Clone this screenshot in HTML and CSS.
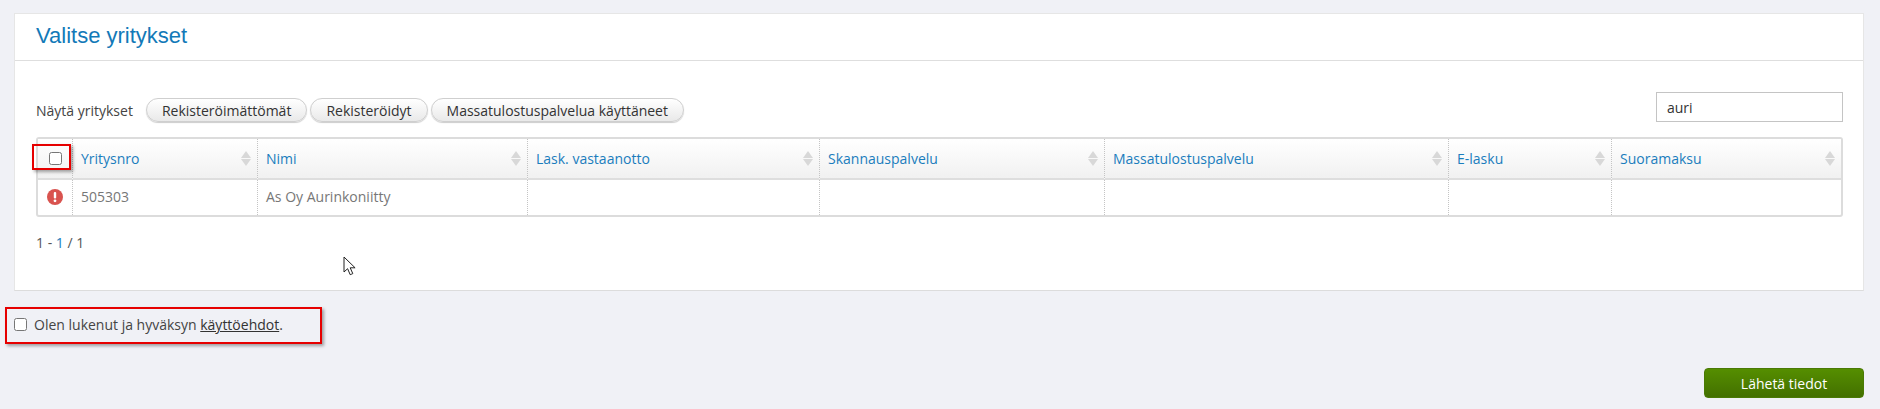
FILE: index.html
```html
<!DOCTYPE html>
<html lang="fi">
<head>
    <meta charset="UTF-8">
    <title>Valitse yritykset</title>
    <link rel="stylesheet" href="styles.css">
</head>
<body>

<section class="panel">
    <h1 class="panel-title">Valitse yritykset</h1>
    <div class="panel-body">
        <div class="toolbar">
            <div class="filters">
                <span class="filters-label">Näytä yritykset</span>
                <button class="pill" type="button">Rekisteröimättömät</button>
                <button class="pill" type="button">Rekisteröidyt</button>
                <button class="pill" type="button">Massatulostuspalvelua käyttäneet</button>
            </div>
            <input class="search" type="text" value="auri">
        </div>

        <div class="table-wrap">
            <table class="grid">
                <colgroup>
                    <col class="col-check">
                    <col class="col-nro">
                    <col class="col-name">
                    <col class="col-lask">
                    <col class="col-scan">
                    <col class="col-mass">
                    <col class="col-elasku">
                    <col>
                </colgroup>
                <thead>
                    <tr>
                        <th class="check-cell"><input class="box" type="checkbox"></th>
                        <th><span class="sort">Yritysnro</span></th>
                        <th><span class="sort">Nimi</span></th>
                        <th><span class="sort">Lask. vastaanotto</span></th>
                        <th><span class="sort">Skannauspalvelu</span></th>
                        <th><span class="sort">Massatulostuspalvelu</span></th>
                        <th><span class="sort">E-lasku</span></th>
                        <th><span class="sort">Suoramaksu</span></th>
                    </tr>
                </thead>
                <tbody>
                    <tr>
                        <td class="check-cell">
                            <svg class="alert" width="16" height="16" viewBox="0 0 16 16">
                                <circle cx="8" cy="8" r="8" fill="#d9534f"/>
                                <rect x="6.800" y="3" width="2.400" height="6.600" rx="1" fill="#fff"/>
                                <circle cx="8" cy="11.800" r="1.400" fill="#fff"/>
                            </svg>
                        </td>
                        <td>505303</td>
                        <td>As Oy Aurinkoniitty</td>
                        <td></td>
                        <td></td>
                        <td></td>
                        <td></td>
                        <td></td>
                    </tr>
                </tbody>
            </table>
            <span class="mark mark-head"></span>
        </div>

        <p class="pager">1 - <span class="pager-current">1</span> / 1</p>
    </div>
    <svg class="cursor" width="14" height="20" viewBox="0 0 14 20">
        <path d="M1 1v15l3.600-3.300 2.600 6 1-.4 1.600-.7-2.600-5.800h4.900z" fill="#fff" stroke="#222" stroke-width="1"/>
    </svg>
</section>

<label class="terms">
    <input class="box" type="checkbox">
    <span>Olen lukenut ja hyväksyn <a href="#">käyttöehdot</a>.</span>
</label>

<div class="actions">
    <button class="send" type="button">Lähetä tiedot</button>
</div>

</body>
</html>
```

FILE: styles.css
```css
body {
    margin: 0;
    height: 409px;
    overflow: hidden;
    background-color: #f0f1f6;
    color: #444;
    font-family: 'Open Sans', sans-serif;
    font-size: 14px;
}
.panel {
    position: relative;
    box-sizing: border-box;
    height: 278px;
    margin: 13px 16px 0 14px;
    background-color: #fff;
    border: 1px solid #e6e6e6;
    border-bottom-color: #dcdcdc;
}
.panel-title {
    height: 46px;
    margin: 0;
    padding-left: 21px;
    border-bottom: 1px solid #dedede;
    color: #1279b8;
    font-family: 'Liberation Sans', Arial, sans-serif;
    font-size: 22px;
    font-weight: normal;
    line-height: 43px;
}
.panel-body {
    padding: 30px 20px 0 21px;
}
.toolbar {
    display: flex;
    justify-content: space-between;
    align-items: flex-end;
    height: 31px;
}
.filters {
    display: flex;
    align-items: center;
    gap: 3px;
}
.filters-label {
    margin-right: 10px;
}
.pill {
    height: 24px;
    padding: 0 15px;
    border: 1px solid #cfcfcf;
    border-radius: 12px;
    background: linear-gradient(#fff, #e9e9e9);
    box-shadow: 0 1px 1px rgba(0, 0, 0, 0.2);
    color: #333;
    font-family: inherit;
    font-size: 14px;
}
.search {
    box-sizing: border-box;
    width: 187px;
    height: 30px;
    padding: 0 10px;
    border: 1px solid #c4c4c4;
    color: #333;
    font-family: inherit;
    font-size: 14px;
}
.table-wrap {
    position: relative;
    margin-top: 15px;
}
.grid {
    box-sizing: border-box;
    width: 100%;
    border: 2px solid #dcdcdc;
    border-radius: 3px;
    border-collapse: separate;
    border-spacing: 0;
    table-layout: fixed;
}
.col-check { width: 34px; }
.col-nro { width: 185px; }
.col-name { width: 270px; }
.col-lask { width: 292px; }
.col-scan { width: 285px; }
.col-mass { width: 344px; }
.col-elasku { width: 163px; }
.grid th {
    height: 39px;
    padding: 0 8px;
    border-bottom: 2px solid #dedede;
    border-left: 1px dotted #c4c4c4;
    background: linear-gradient(#fff, #f1f1f1);
    font-weight: normal;
    text-align: left;
}
.grid td {
    height: 33px;
    padding: 0 8px 2px;
    border-left: 1px dotted #c4c4c4;
    color: #777;
}
.grid .check-cell {
    padding: 0 0 2px;
    border-left: 0;
    text-align: center;
}
.grid th.check-cell {
    padding: 0;
}
.grid th .box {
    margin-bottom: 3px;
}
.sort {
    display: block;
    position: relative;
    color: #1a7dbd;
}
/* Pikku nuolet sarakeotsikon oikeassa reunassa */
.sort::before,
.sort::after {
    content: "";
    position: absolute;
    right: -2px;
    border-left: 5px solid transparent;
    border-right: 5px solid transparent;
}
.sort::before {
    top: 2px;
    border-bottom: 7px solid #d8d8d8;
}
.sort::after {
    top: 10px;
    border-top: 7px solid #d8d8d8;
}
.box {
    width: 13px;
    height: 13px;
    margin: 0;
    vertical-align: middle;
}
.alert {
    display: block;
    margin: 0 auto;
}
.mark {
    position: absolute;
    box-sizing: border-box;
    border: 2px solid #e60000;
    box-shadow: 2px 2px 3px rgba(0, 0, 0, 0.35);
    pointer-events: none;
}
.mark-head {
    left: -4px;
    top: 7px;
    width: 39px;
    height: 26px;
}
.pager {
    margin: 16px 0 0;
    color: #555;
}
.pager-current {
    color: #1a7dbd;
}
.cursor {
    position: absolute;
    left: 328px;
    top: 242px;
}
.terms {
    display: flex;
    align-items: center;
    gap: 7px;
    box-sizing: border-box;
    width: 317px;
    height: 37px;
    margin: 16px 0 0 5px;
    padding: 0 0 2px 7px;
    border: 2px solid #e60000;
    box-shadow: 2px 2px 3px rgba(0, 0, 0, 0.35);
}
.terms a {
    color: #333;
}
.actions {
    display: flex;
    justify-content: flex-end;
    margin: 24px 16px 0 0;
}
.send {
    width: 160px;
    height: 30px;
    border: 1px solid #4a7a05;
    border-radius: 4px;
    background: linear-gradient(#558e00, #437000);
    color: #fff;
    font-family: inherit;
    font-size: 14px;
}
```
